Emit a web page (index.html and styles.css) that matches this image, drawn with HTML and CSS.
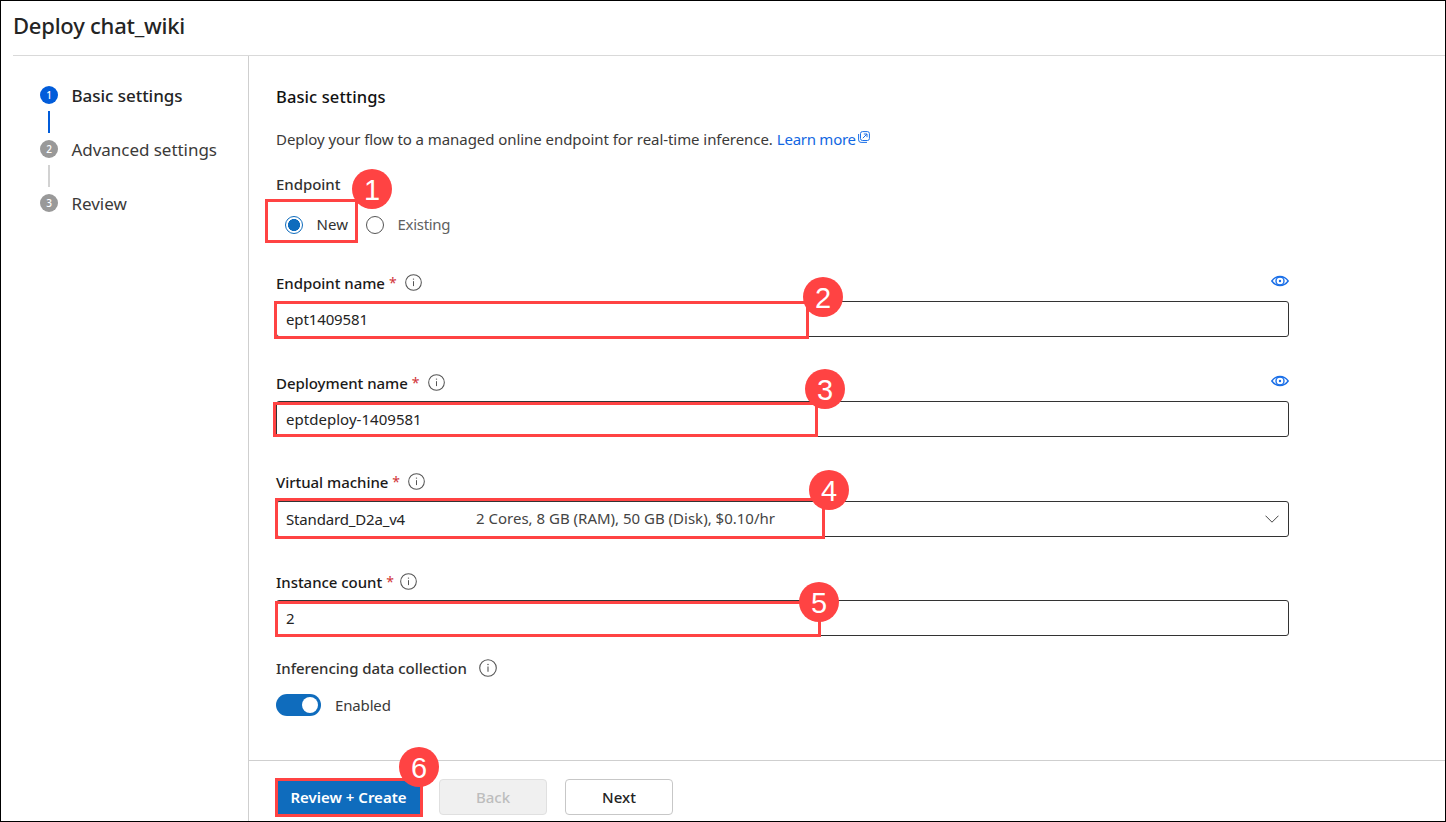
FILE: index.html
```html
<!DOCTYPE html>
<html lang="en">
<head>
<meta charset="utf-8">
<title>Deploy chat_wiki</title>
<link rel="stylesheet" href="styles.css">
</head>
<body>
<svg class="defs" width="0" height="0">
  <symbol id="info" viewBox="0 0 18 18">
    <circle cx="9" cy="9" r="8.3" fill="none" stroke="#555" stroke-width="1.100"/>
    <path d="M9 7.600v5.200" stroke="#555" stroke-width="1.100"/>
    <circle cx="9" cy="5.400" r=".75" fill="#555"/>
  </symbol>
  <symbol id="eye" viewBox="0 0 18 12">
    <path d="M.8 6C3 2.900 5.800 1.500 9 1.500S15 2.900 17.200 6C15 9.100 12.200 10.500 9 10.500S3 9.100.8 6Z" fill="none" stroke="#1a6fe8" stroke-width="1.400"/>
    <circle cx="9" cy="6" r="4" fill="none" stroke="#1a6fe8" stroke-width="1.400"/>
    <circle cx="9" cy="6" r="1.200" fill="#1a6fe8"/>
  </symbol>
</svg>
<div class="window">
  <header class="header"><h1>Deploy chat_wiki</h1></header>
  <div class="body">
    <nav class="steps">
      <div class="step current"><span class="dot">1</span><span class="name">Basic settings</span></div>
      <div class="connector current"></div>
      <div class="step"><span class="dot">2</span><span class="name">Advanced settings</span></div>
      <div class="connector"></div>
      <div class="step"><span class="dot">3</span><span class="name">Review</span></div>
    </nav>
    <div class="main">
      <main class="form">
        <h2>Basic settings</h2>
        <p class="intro"><span>Deploy your flow to a managed online endpoint for real-time inference.</span>
          <a class="link">Learn more</a><svg class="external" viewBox="0 0 12 12" width="12" height="12" fill="none" stroke="#1a6fe8"><rect x="2.500" y=".6" width="8.900" height="8.900" rx="2"/><path d="M.6 3v5.900a2.500 2.500 0 0 0 2.500 2.500H9M4.800 7.200l4-4M5.800 3h3.200v3.200"/></svg></p>
        <div class="label group">Endpoint</div>
        <div class="radios">
          <span class="radio checked"></span><span class="radio-text on">New</span>
          <span class="radio"></span><span class="radio-text">Existing</span>
        </div>
        <section class="field first">
          <div class="label"><span>Endpoint name</span><i>*</i><svg class="info"><use href="#info"/></svg><svg class="eye"><use href="#eye"/></svg></div>
          <div class="input">ept1409581</div>
        </section>
        <section class="field">
          <div class="label"><span>Deployment name</span><i>*</i><svg class="info"><use href="#info"/></svg><svg class="eye"><use href="#eye"/></svg></div>
          <div class="input deployment">eptdeploy-1409581</div>
        </section>
        <section class="field machine">
          <div class="label"><span>Virtual machine</span><i>*</i><svg class="info"><use href="#info"/></svg></div>
          <div class="input"><span class="size">Standard_D2a_v4</span><span class="spec">2 Cores, 8 GB (RAM), 50 GB (Disk), $0.10/hr</span><svg class="chevron" viewBox="0 0 14 8" width="14" height="8"><path d="M.5.700 7 7.200 13.500.700" fill="none" stroke="#444"/></svg></div>
        </section>
        <section class="field count">
          <div class="label"><span>Instance count</span><i>*</i><svg class="info"><use href="#info"/></svg></div>
          <div class="input">2</div>
        </section>
        <div class="label collection"><span>Inferencing data collection</span><svg class="info"><use href="#info"/></svg></div>
        <div class="toggle-row"><span class="toggle"></span><span>Enabled</span></div>
      </main>
      <footer class="footer">
        <button class="btn primary">Review + Create</button>
        <button class="btn disabled">Back</button>
        <button class="btn">Next</button>
      </footer>
    </div>
  </div>
  <div class="mark m1"></div><div class="mark m2"></div><div class="mark m3"></div>
  <div class="mark m4"></div><div class="mark m5"></div><div class="mark m6"></div>
  <div class="badge b1">1</div><div class="badge b2">2</div><div class="badge b3">3</div>
  <div class="badge b4">4</div><div class="badge b5">5</div><div class="badge b6">6</div>
</div>
</body>
</html>
```
FILE: styles.css
```css
* { box-sizing: border-box; margin: 0; }
body { font: 400 15px/20px "Noto Sans", "Open Sans", sans-serif; letter-spacing: -0.06px; color: #3b3a39; background: #fff; }
.defs { position: absolute; }
.window { position: relative; width: 1446px; height: 822px; border: 1px solid #000; display: flex; flex-direction: column; overflow: hidden; }
.header { height: 55px; margin-left: 12px; padding-top: 9px; border-bottom: 1px solid #d9d9d9; }
h1 { font-size: 22px; line-height: 30px; font-weight: 500; letter-spacing: -0.23px; color: #242424; }
.body { flex: 1; display: flex; }

.steps { width: 248px; border-right: 1px solid #cfcfcf; padding: 30px 0 0 39px; font-size: 17px; letter-spacing: -0.04px; }
.step { display: flex; align-items: center; gap: 13.5px; height: 18px; line-height: 18px; }
.step.current { font-weight: 500; color: #242424; }
.name { padding-top: 2px; }
.dot { width: 18px; height: 18px; border-radius: 50%; background: #999; color: #fff; font-size: 10px; font-weight: 500; text-align: center; }
.current .dot { background: #015cda; }
.connector { width: 2px; height: 22px; margin: 7px 0 7px 8px; background: #d2d2d2; }
.connector.current { background: #015cda; }

.main { flex: 1; display: flex; flex-direction: column; }
.form { flex: 1; padding: 31px 0 0 27px; }
h2 { font-size: 16.5px; line-height: 20px; font-weight: 500; letter-spacing: 0.1px; color: #111; }
.intro { display: flex; margin-top: 22px; }
.link { color: #1267e2; margin-left: 4px; letter-spacing: -0.26px; }
.external { margin: 2px 0 0 2px; }
.label { display: flex; width: 1013px; height: 20px; font-weight: 500; letter-spacing: -0.04px; color: #1b1a19; }
.label i { font-style: normal; font-size: 14px; font-weight: 400; color: #d13438; margin-left: 4px; width: 7px; }
.info { width: 17px; height: 17px; margin: 1px 0 0 9px; }
.eye { width: 18px; height: 12px; margin: 2px 0 0 auto; }
.group { margin-top: 25px; color: #323130; }
.radios { display: flex; align-items: center; height: 20px; margin-top: 21px; padding-left: 8.5px; }
.radio { width: 18px; height: 18px; border: 1px solid #555; border-radius: 50%; }
.radio.checked { border-color: #0f6cbd; background: radial-gradient(circle, #0f6cbd 5.700px, #fff 6.300px); }
.radio-text { color: #616161; margin: -2px 0 0 14px; letter-spacing: -0.3px; }
.radio-text.on { width: 49px; color: #323130; letter-spacing: 0.1px; }
.field { margin-top: 36px; }
.field.first { margin-top: 38px; }
.field.machine, .field.count { margin-top: 35px; }
.input { display: flex; align-items: center; width: 1013px; height: 36px; margin-top: 8px; padding: 0 9px; border: 1px solid #333; border-radius: 3px; letter-spacing: -0.12px; color: #242424; }
.input.deployment { letter-spacing: 0.03px; }
.machine .input { margin-top: 9px; }
.size { width: 190px; letter-spacing: -0.17px; }
.spec { letter-spacing: 0; margin-top: -2px; color: #444; }
.chevron { margin-left: auto; }
.count .info { margin-left: 7px; }
.collection { margin-top: 22px; color: #323130; }
.collection .info { width: 18px; height: 18px; margin: 1px 0 0 12px; }
.toggle-row { display: flex; align-items: center; gap: 14px; height: 22px; margin-top: 16px; letter-spacing: -0.15px; }
.toggle { width: 45px; height: 22px; padding: 3px; border-radius: 11px; background: #0f6cbd; }
.toggle::after { content: ""; display: block; width: 16px; height: 16px; margin-left: auto; border-radius: 50%; background: #fff; }

.footer { display: flex; height: 61px; padding: 18px 0 0 27px; border-top: 1px solid #cfcfcf; }
.btn { width: 108px; height: 36px; margin-right: 18px; padding: 0; border: 1px solid #c7c7c7; border-radius: 4px; background: #fff; color: #242424; font: inherit; font-weight: 500; }
.primary { width: 145px; border: 0; background: #0f6cbd; color: #fff; font-weight: 600; letter-spacing: 0; }
.disabled { background: #f0f0f0; border-color: #e0e0e0; color: #bdbdbd; }

/* Numbered callouts drawn over the dialog */
.mark { position: absolute; border: 3px solid #ff4343; }
.m1 { left: 264px; top: 198px; width: 93px; height: 44px; }
.m2 { left: 273px; top: 300px; width: 535px; height: 38px; }
.m3 { left: 272px; top: 401px; width: 545px; height: 35px; }
.m4 { left: 274px; top: 497px; width: 550px; height: 41px; }
.m5 { left: 274px; top: 600px; width: 546px; height: 36px; }
.m6 { left: 274px; top: 777px; width: 148px; height: 39px; }
.badge { position: absolute; width: 40px; height: 40px; border-radius: 50%; background: #ff4343; color: #fff; font: 29px/42px "Liberation Sans", Arial, sans-serif; letter-spacing: 0; text-align: center; }
.b1 { left: 351px; top: 168px; }
.b2 { left: 802px; top: 276px; }
.b3 { left: 804px; top: 368px; }
.b4 { left: 808px; top: 469px; }
.b5 { left: 798px; top: 581px; }
.b6 { left: 398px; top: 746px; }
```
